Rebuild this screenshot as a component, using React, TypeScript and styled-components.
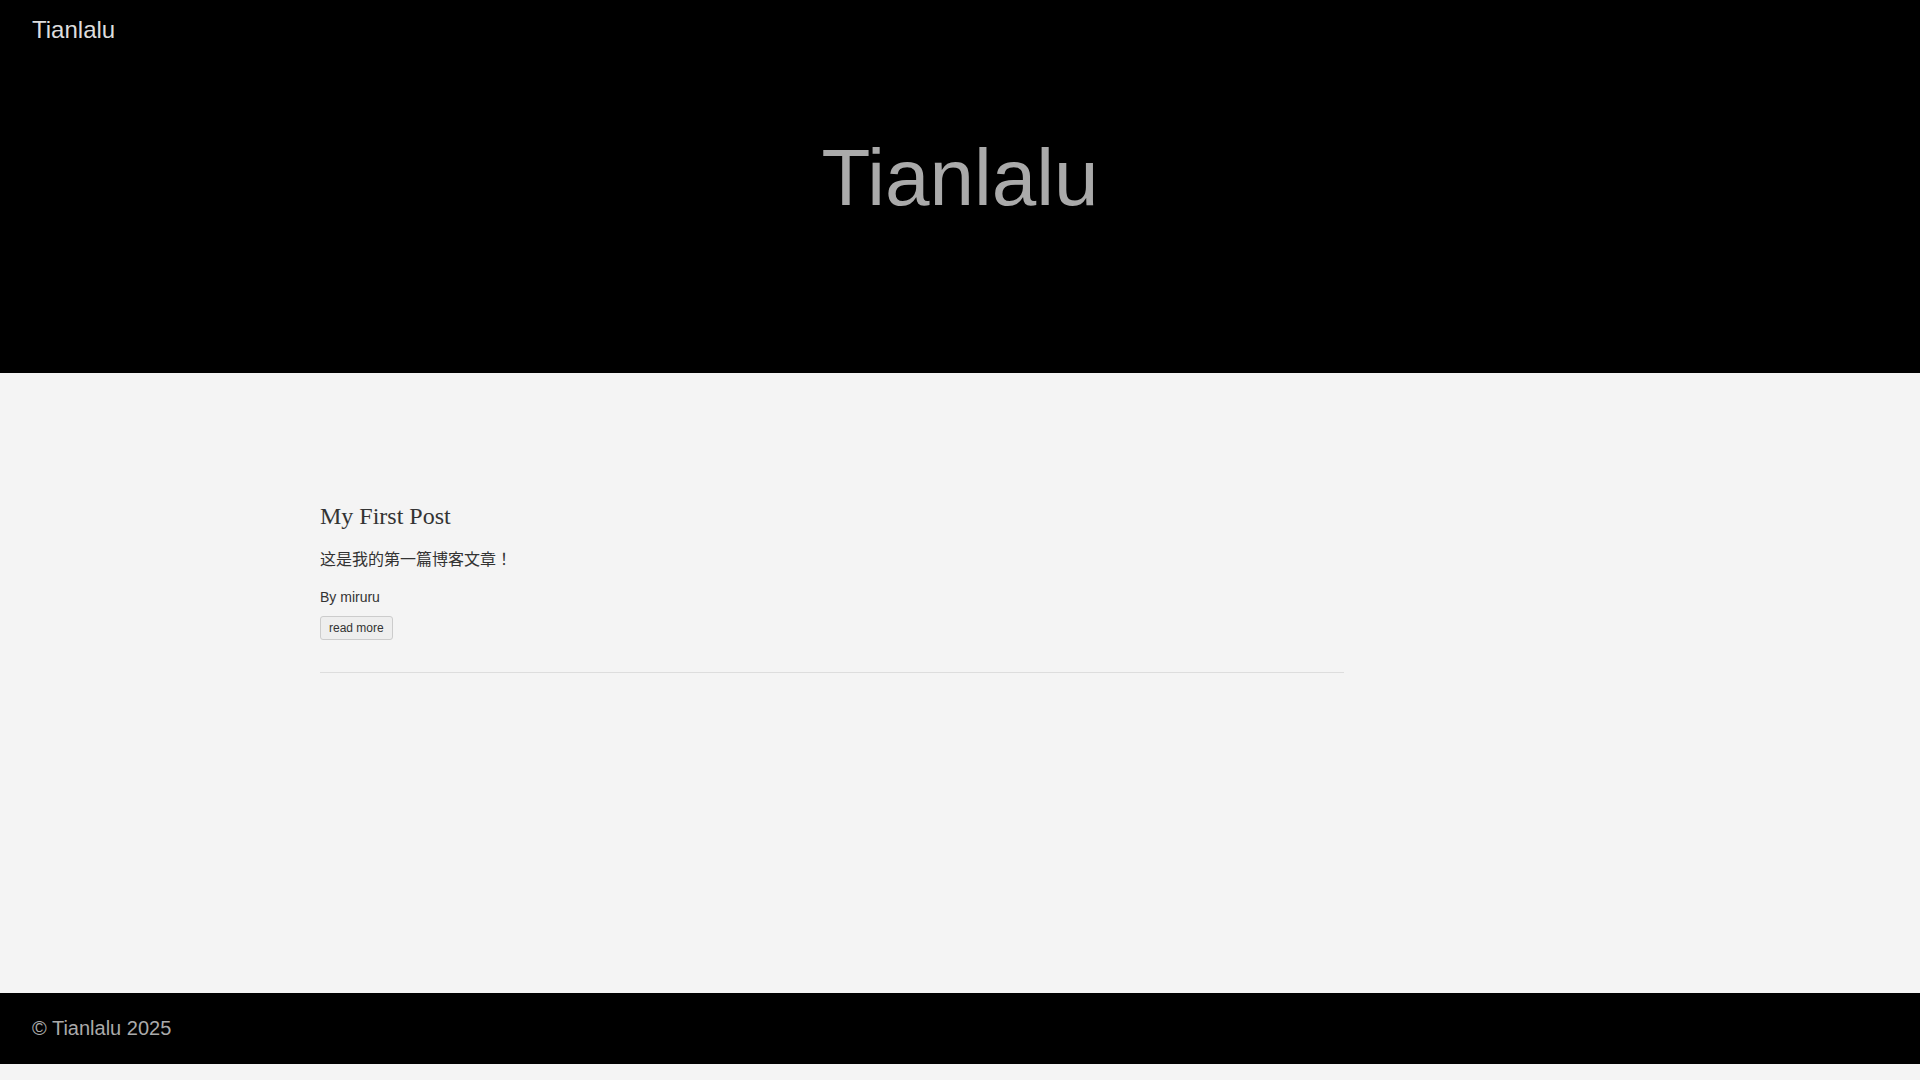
import styled, { createGlobalStyle } from 'styled-components'

const GlobalStyle = createGlobalStyle`
  body {
    margin: 0;
    background: #f4f4f4;
    font-family: 'Liberation Sans', Arial, 'Noto Sans CJK JP', sans-serif;
    color: #333;
  }
`

const Header = styled.header`
  background: #000;
  height: 373px;
`

const Nav = styled.nav`
  padding: 16px 32px;
`

const Logo = styled.a`
  color: #ddd;
  font-size: 24px;
  text-decoration: none;
`

const Hero = styled.h1`
  margin: 0;
  padding-top: 72px;
  text-align: center;
  font-size: 80px;
  font-weight: 400;
  color: #aaa;
`

const Main = styled.main`
  min-height: 620px;
  box-sizing: border-box;
  width: 1280px;
  margin: 0 auto;
  padding-top: 130px;
`

const Post = styled.article`
  width: 1024px;
  padding-bottom: 32px;
  border-bottom: 1px solid #ddd;
`

const PostTitle = styled.h2`
  margin: 0;
  font-family: 'Liberation Serif', 'Times New Roman', serif;
  font-size: 24px;
  font-weight: 400;
  color: #333;
`

const Excerpt = styled.p`
  margin: 18px 0 0;
  font-size: 16px;
  line-height: 24px;
`

const Author = styled.p`
  margin: 15px 0 0;
  font-size: 14px;
  line-height: 21px;
`

const ReadMore = styled.button`
  margin-top: 8px;
  padding: 4px 8px;
  font-family: inherit;
  font-size: 12px;
  color: #333;
  background: #eee;
  border: 1px solid #ccc;
  border-radius: 3px;
  cursor: pointer;
`

const Footer = styled.footer`
  background: #000;
  padding: 24px 32px;
  color: #aaa;
  font-size: 20px;
`

export default function App() {
  return (
    <>
      <GlobalStyle />
      <Header>
        <Nav>
          <Logo href="#">Tianlalu</Logo>
        </Nav>
        <Hero>Tianlalu</Hero>
      </Header>
      <Main>
        <Post>
          <PostTitle>My First Post</PostTitle>
          <Excerpt>这是我的第一篇博客文章！</Excerpt>
          <Author>By miruru</Author>
          <ReadMore>read more</ReadMore>
        </Post>
      </Main>
      <Footer>© Tianlalu 2025</Footer>
    </>
  )
}
